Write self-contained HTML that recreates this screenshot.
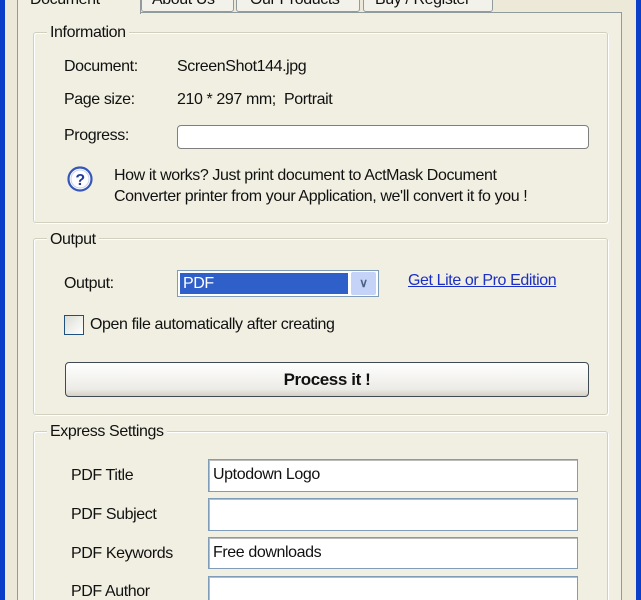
<!DOCTYPE html>
<html><head><meta charset="utf-8"><style>
*{margin:0;padding:0;box-sizing:border-box}
html,body{width:641px;height:600px;overflow:hidden}
body{background:#ece9d8;position:relative;font-family:"Liberation Sans",sans-serif;font-size:16px;color:#111;letter-spacing:-0.4px}
.a{position:absolute;white-space:nowrap}
.t{line-height:18px}
.grp{position:absolute;border:1px solid #d0d0bf;border-radius:3px;box-shadow:inset 1px 1px 0 #fff,1px 1px 0 #fff}
.leg{position:absolute;background:#f1efe2;padding:0 3px;line-height:18px}
.inp{position:absolute;background:#fff;border:1px solid #7f9db9;box-shadow:inset 1px 1px 0 #bbb}
</style></head><body>
<div class="a" style="left:0;top:0;width:5px;height:600px;background:#0a3ec8"></div>
<div class="a" style="left:636px;top:0;width:5px;height:600px;background:#0a3ec8"></div>
<div class="a" style="left:141px;top:-6px;width:93px;height:18px;border:1px solid #919b9c;background:#f2f1ea;border-radius:3px"></div>
<div class="a t" style="left:152px;top:-9px">About Us</div>
<div class="a" style="left:236px;top:-6px;width:124px;height:18px;border:1px solid #919b9c;background:#f2f1ea;border-radius:3px"></div>
<div class="a t" style="left:250px;top:-9px">Our Products</div>
<div class="a" style="left:363px;top:-6px;width:130px;height:18px;border:1px solid #919b9c;background:#f2f1ea;border-radius:3px"></div>
<div class="a t" style="left:375px;top:-9px">Buy / Register</div>
<div class="a" style="left:17px;top:12px;width:605px;height:600px;border:1px solid #919b9c;background:#f1efe2"></div>
<div class="a" style="left:17px;top:-6px;width:124px;height:20px;background:#f1efe2;border:1px solid #919b9c;border-bottom:none"></div>
<div class="a t" style="left:30px;top:-9px">Document</div>

<div class="grp" style="left:33px;top:32px;width:575px;height:191px"></div>
<div class="leg" style="left:47px;top:24px">Information</div>
<div class="a t" style="left:64px;top:58px">Document:</div>
<div class="a t" style="left:177px;top:58px">ScreenShot144.jpg</div>
<div class="a t" style="left:64px;top:91px">Page size:</div>
<div class="a t" style="left:177px;top:91px">210 * 297 mm;&nbsp; Portrait</div>
<div class="a t" style="left:64px;top:127px">Progress:</div>
<div class="a" style="left:177px;top:125px;width:412px;height:24px;background:#fff;border:1px solid #7f7f7f;border-radius:4px"></div>
<svg class="a" style="left:67px;top:166px" width="26" height="26" viewBox="0 0 26 26"><circle cx="13" cy="13" r="11.5" fill="#fff" stroke="#3656b8" stroke-width="2.2"/><circle cx="13" cy="13" r="9" fill="none" stroke="#c8d2f0" stroke-width="1"/><text x="13" y="19" text-anchor="middle" font-family="Liberation Sans" font-weight="bold" font-size="16" fill="#223a9a">?</text></svg>
<div class="a t" style="left:114px;top:167px">How it works? Just print document to ActMask Document</div>
<div class="a t" style="left:114px;top:188px">Converter printer from your Application, we'll convert it fo you !</div>

<div class="grp" style="left:33px;top:238px;width:575px;height:177px"></div>
<div class="leg" style="left:47px;top:231px">Output</div>
<div class="a t" style="left:64px;top:275px">Output:</div>
<div class="a" style="left:177px;top:270px;width:202px;height:27px;background:#fff;border:1px solid #7f9db9"></div>
<div class="a t" style="left:180px;top:273px;width:168px;height:21px;background:#2f5fc8;color:#fff;padding:2px 0 0 3px">PDF</div>
<div class="a" style="left:351px;top:272px;width:25px;height:23px;background:#c4d3f7;border-radius:2px;color:#4d6185;text-align:center;font-size:12px;line-height:23px;font-weight:bold">&#8744;</div>
<div class="a t" style="left:408px;top:272px;color:#1c2fc4;text-decoration:underline">Get Lite or Pro Edition</div>
<div class="a" style="left:64px;top:315px;width:20px;height:20px;border:1px solid #1c5180;background:linear-gradient(135deg,#dcdcd5,#fff)"></div>
<div class="a t" style="left:90px;top:316px">Open file automatically after creating</div>
<div class="a" style="left:65px;top:362px;width:524px;height:35px;border:1px solid #404a55;border-radius:4px;background:linear-gradient(#fff,#ecebe6 80%,#d6d0c5);text-align:center;font-weight:bold;line-height:33px;font-size:17px">Process it !</div>

<div class="grp" style="left:33px;top:431px;width:575px;height:190px"></div>
<div class="leg" style="left:47px;top:423px">Express Settings</div>
<div class="a t" style="left:71px;top:467px">PDF Title</div>
<div class="a t" style="left:71px;top:506px">PDF Subject</div>
<div class="a t" style="left:71px;top:545px">PDF Keywords</div>
<div class="a t" style="left:71px;top:583px">PDF Author</div>
<div class="inp" style="left:208px;top:459px;width:370px;height:33px"></div>
<div class="a t" style="left:213px;top:466px">Uptodown Logo</div>
<div class="inp" style="left:208px;top:498px;width:370px;height:33px"></div>
<div class="inp" style="left:208px;top:537px;width:370px;height:32px"></div>
<div class="a t" style="left:213px;top:544px">Free downloads</div>
<div class="inp" style="left:208px;top:576px;width:370px;height:33px"></div>
</body></html>
